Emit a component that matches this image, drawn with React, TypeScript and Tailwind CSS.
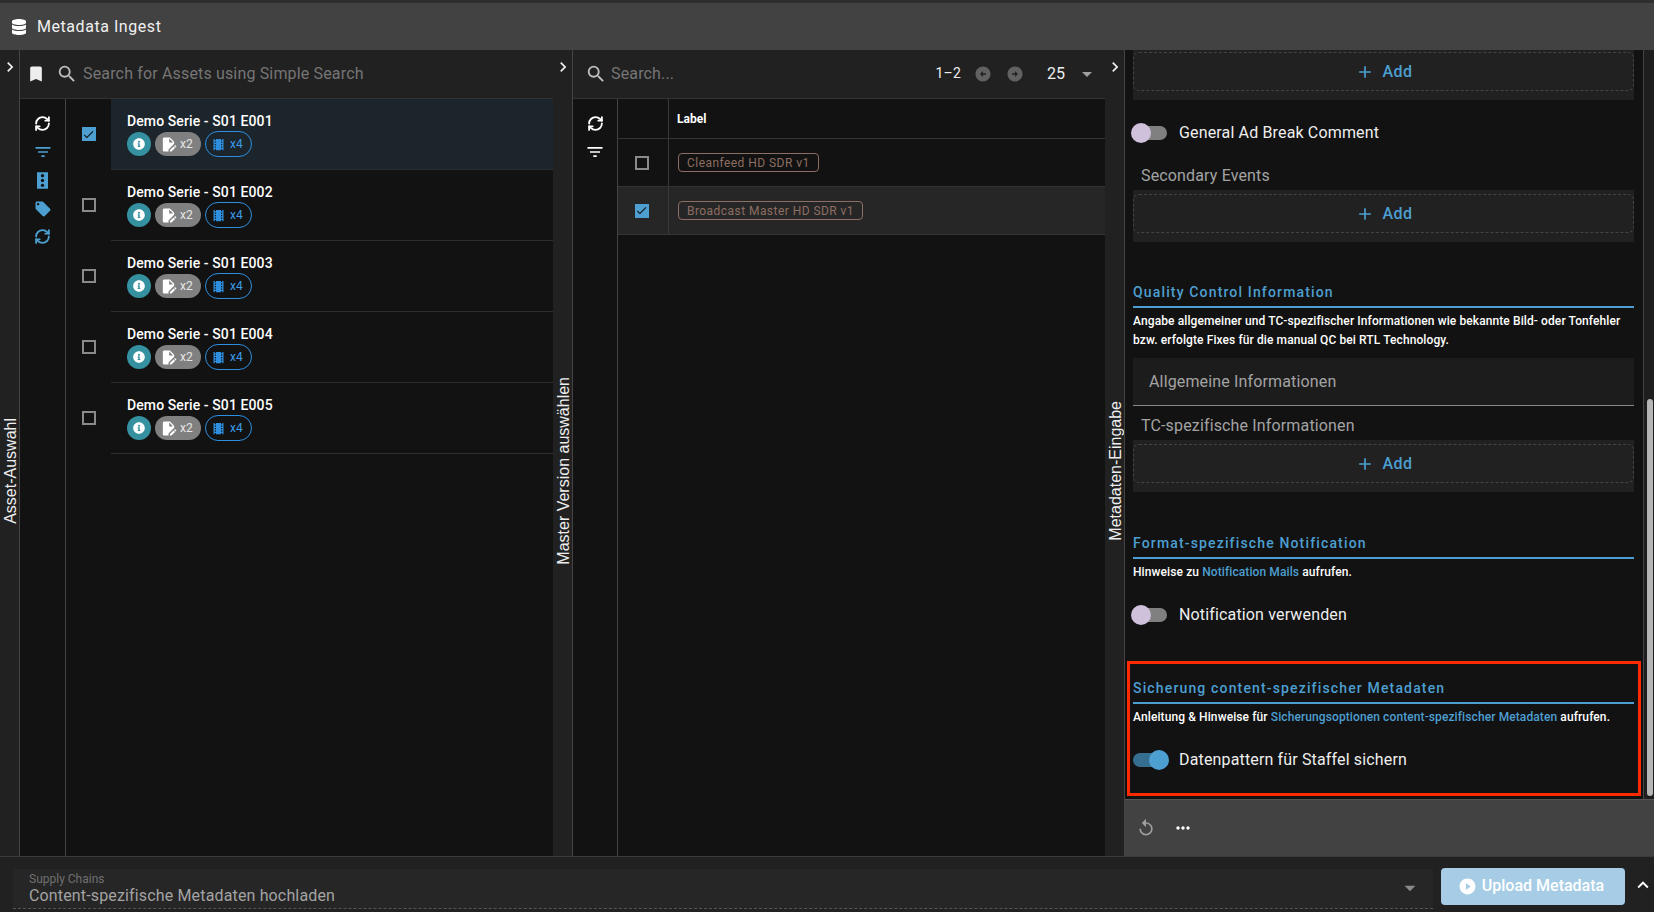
import type { ReactNode } from 'react'
import {
  MdAdd,
  MdArrowCircleLeft,
  MdArrowCircleRight,
  MdArrowDropDown,
  MdBookmark,
  MdCheck,
  MdChevronRight,
  MdEditDocument,
  MdFilterList,
  MdKeyboardArrowUp,
  MdLocalMovies,
  MdLocalOffer,
  MdMoreHoriz,
  MdPlayCircleFilled,
  MdReplay,
  MdSearch,
} from 'react-icons/md'
import { FaDatabase, FaInfoCircle } from 'react-icons/fa'
import { RefreshCw } from 'lucide-react'

const assets = ['E001', 'E002', 'E003', 'E004', 'E005']

function Rail({ label }: { label: string }) {
  return (
    <div className="flex h-full w-[20px] shrink-0 flex-col items-center border-r border-[#444] bg-[#212121] text-[#eee]">
      <MdChevronRight className="mt-[7px] size-[20px] shrink-0" />
      <div className="flex flex-1 items-center pl-[2px] pt-[8px]">
        <span className="rotate-180 whitespace-nowrap font-['Liberation_Sans',sans-serif] text-[16px] [writing-mode:vertical-rl]">
          {label}
        </span>
      </div>
    </div>
  )
}

function Checkbox({ checked }: { checked?: boolean }) {
  if (checked) {
    return (
      <span className="flex size-[14px] items-center justify-center bg-[#4d9fd1] text-[#111]">
        <MdCheck className="size-[13px]" />
      </span>
    )
  }
  return <span className="size-[14px] border-2 border-[#8a8a8a]" />
}

function StackIcon() {
  return (
    <svg viewBox="0 0 16 24" className="h-[17px] w-[11px]" fill="#4d9fd1">
      <path d="M0 0h16v24H0z" />
      <circle cx="8" cy="5" r="2.4" fill="#121212" />
      <circle cx="8" cy="12" r="2.4" fill="#121212" />
      <circle cx="8" cy="19" r="2.4" fill="#121212" />
    </svg>
  )
}

function AssetRow({ episode, selected }: { episode: string; selected: boolean }) {
  return (
    <div className="flex h-[71px]">
      <div className="flex w-[45px] items-center justify-center pb-[1px]">
        <Checkbox checked={selected} />
      </div>
      <div
        className={`flex-1 border-b border-[#2e2e2e] pl-[16px] pt-[12px] ${selected ? 'bg-[#1c252c]' : ''}`}
      >
        <p className="text-[14px] font-medium leading-[20px] tracking-[0.1px] text-white">
          Demo Serie - S01 {episode}
        </p>
        <div className="flex items-center">
          <span className="flex size-[24px] items-center justify-center rounded-full bg-[#35909f] text-white">
            <FaInfoCircle className="size-[12px]" />
          </span>
          <span className="ml-[4px] flex h-[24px] w-[46px] items-center rounded-full bg-[#808080] pl-[5px] text-[12px] text-[#e6e6e6]">
            <MdEditDocument className="size-[17px] text-white" />
            <span className="ml-[3px]">x2</span>
          </span>
          <span className="ml-[4px] flex h-[26px] w-[47px] items-center rounded-full border border-[#2e8fe0] pl-[5px] text-[12px] text-[#3b9be8]">
            <MdLocalMovies className="size-[15px] text-[#2e8fe0]" />
            <span className="mb-[1px] ml-[4px]">x4</span>
          </span>
        </div>
      </div>
    </div>
  )
}

function VersionRow({ label, selected }: { label: string; selected?: boolean }) {
  return (
    <div className={`flex h-[48px] border-b border-[#333] ${selected ? 'bg-[#262626]' : ''}`}>
      <div className="flex w-[51px] items-center justify-center border-r border-[#3a3a3a] pr-[3px]">
        <Checkbox checked={selected} />
      </div>
      <div className="flex items-center pl-[9px]">
        <span className="flex h-[19px] items-center rounded-[4px] border border-[#8d6e63] px-[8px] text-[12px] tracking-[0.45px] text-[#8d6e63]">
          {label}
        </span>
      </div>
    </div>
  )
}

function AddBox({ first }: { first?: boolean }) {
  return (
    <div className={`bg-[#212121] pb-[9px] ${first ? 'pt-[2px]' : 'pt-[4px]'}`}>
      <div className="flex h-[39px] items-center justify-center gap-[8px] rounded-[6px] border border-dashed border-[#444] text-[16px] font-medium tracking-[0.4px] text-[#4d9fd1]">
        <MdAdd className="size-[20px]" />
        Add
      </div>
    </div>
  )
}

function Toggle({ label, on, className }: { label: string; on?: boolean; className?: string }) {
  return (
    <div className={`flex h-[30px] items-center ${className ?? ''}`}>
      <div className="relative ml-[-2px] h-[20px] w-[38px] shrink-0">
        <span
          className={`absolute left-[2px] top-[3px] h-[14px] w-[34px] rounded-full ${on ? 'bg-[#366e91]' : 'bg-[#808080]'}`}
        />
        <span
          className={`absolute top-0 size-[20px] rounded-full ${on ? 'left-[18px] bg-[#4d9fd1]' : 'left-0 bg-[#cfc0dc]'}`}
        />
      </div>
      <span className="ml-[10px] text-[16px] tracking-[0.15px] text-[#eee]">{label}</span>
    </div>
  )
}

function Section({ title, children, className }: { title: string; children: ReactNode; className?: string }) {
  return (
    <div className={className}>
      <h3 className="h-[27px] border-b-2 border-[#4d9fd1] pt-[1px] text-[14px] font-medium leading-[20px] tracking-[1.15px] text-[#4d9fd1]">
        {title}
      </h3>
      <p className="mt-[4px] text-[12px] font-medium leading-[19px] tracking-[0.1px] text-white">{children}</p>
    </div>
  )
}

function Link({ children }: { children: ReactNode }) {
  return <span className="text-[#4d9fd1]">{children}</span>
}

function FieldLabel({ children, className }: { children: ReactNode; className?: string }) {
  return <p className={`h-[24px] text-[16px] leading-[24px] tracking-[0.15px] text-[#a3a3a3] ${className ?? ''}`}>{children}</p>
}

export default function App() {
  return (
    <div className="flex h-[912px] w-[1654px] flex-col overflow-hidden bg-[#121212] font-['Roboto',sans-serif]">
      <div className="h-[3px] shrink-0 bg-[#2e2e2e]" />
      <header className="flex h-[47px] shrink-0 items-center bg-[#424242] pl-[11px] text-white">
        <FaDatabase className="size-[16px]" />
        <span className="ml-[10px] text-[16px] tracking-[0.55px] text-[#f0f0f0]">Metadata Ingest</span>
      </header>

      <main className="flex h-[806px] shrink-0">
        {/* Asset-Auswahl */}
        <Rail label="Asset-Auswahl" />
        <section className="flex w-[533px] shrink-0 flex-col">
          <div className="flex h-[49px] shrink-0 items-center border-b border-[#333] bg-[#212121] pb-[1px] pl-[6px] text-[#eee]">
            <MdBookmark className="size-[20px]" />
            <MdSearch className="ml-[10px] size-[22px] text-[#bdbdbd]" />
            <span className="ml-[5px] text-[16px] tracking-[0.16px] text-[#757575]">
              Search for Assets using Simple Search
            </span>
          </div>
          <div className="flex flex-1">
            <div className="flex w-[46px] shrink-0 flex-col items-center gap-[10px] border-r border-[#444] pt-[16px]">
              <RefreshCw className="size-[17px] text-white" strokeWidth={2.6} />
              <MdFilterList className="size-[20px] text-[#4d9fd1]" />
              <StackIcon />
              <MdLocalOffer className="ml-[1px] mt-[1px] size-[18px] text-[#4d9fd1]" />
              <RefreshCw className="size-[17px] text-[#4d9fd1]" strokeWidth={2.6} />
            </div>
            <div className="flex-1">
              {assets.map((episode, i) => (
                <AssetRow key={episode} episode={episode} selected={i === 0} />
              ))}
            </div>
          </div>
        </section>

        {/* Master Version */}
        <Rail label="Master Version auswählen" />
        <section className="flex w-[532px] shrink-0 flex-col">
          <div className="flex h-[49px] shrink-0 items-center border-b border-[#333] bg-[#212121] pb-[1px] pl-[12px] text-[#eee]">
            <MdSearch className="size-[22px] text-[#bdbdbd]" />
            <span className="ml-[4px] text-[16px] tracking-[0.15px] text-[#757575]">Search...</span>
            <span className="ml-auto text-[14px] tracking-[0.2px]">1–2</span>
            <MdArrowCircleLeft className="ml-[13px] size-[18px] text-[#616161]" />
            <MdArrowCircleRight className="ml-[14px] size-[18px] text-[#616161]" />
            <span className="ml-[23px] text-[16px]">25</span>
            <MdArrowDropDown className="ml-[10px] mr-[6px] size-[24px] text-[#a0a0a0]" />
          </div>
          <div className="flex flex-1">
            <div className="flex w-[45px] shrink-0 flex-col items-center gap-[10px] border-r border-[#444] pt-[16px] text-white">
              <RefreshCw className="size-[17px]" strokeWidth={2.6} />
              <MdFilterList className="size-[20px]" />
            </div>
            <div className="flex-1">
              <div className="flex h-[40px] border-b border-[#333]">
                <div className="w-[51px] border-r border-[#3a3a3a]" />
                <span className="flex items-center pl-[8px] text-[12px] font-bold text-white">Label</span>
              </div>
              <VersionRow label="Cleanfeed HD SDR v1" />
              <VersionRow label="Broadcast Master HD SDR v1" selected />
            </div>
          </div>
        </section>

        {/* Metadaten-Eingabe */}
        <Rail label="Metadaten-Eingabe" />
        <section className="flex flex-1 flex-col">
          <div className="flex h-[749px] shrink-0">
            <div className="relative flex w-[518px] shrink-0 flex-col overflow-hidden pl-[8px] pr-[9px]">
              <AddBox first />
              <Toggle label="General Ad Break Comment" className="mt-[18px]" />
              <FieldLabel className="mt-[16px] pl-[8px]">Secondary Events</FieldLabel>
              <div className="mt-[2px]">
                <AddBox />
              </div>
              <Section title="Quality Control Information" className="mt-[39px]">
                Angabe allgemeiner und TC-spezifischer Informationen wie bekannte Bild- oder Tonfehler
                <br />
                bzw. erfolgte Fixes für die manual QC bei RTL Technology.
              </Section>
              <div className="mt-[8px] flex h-[48px] items-center border-b border-[#888] bg-[#1c1c1c] pl-[16px]">
                <FieldLabel>Allgemeine Informationen</FieldLabel>
              </div>
              <FieldLabel className="mt-[8px] pl-[8px]">TC-spezifische Informationen</FieldLabel>
              <div className="mt-[2px]">
                <AddBox />
              </div>
              <Section title="Format-spezifische Notification" className="mt-[40px]">
                Hinweise zu <Link>Notification Mails</Link> aufrufen.
              </Section>
              <Toggle label="Notification verwenden" className="mt-[18px]" />
              <Section title="Sicherung content-spezifischer Metadaten" className="mt-[47px]">
                Anleitung &amp; Hinweise für <Link>Sicherungsoptionen content-spezifischer Metadaten</Link> aufrufen.
              </Section>
              <Toggle label="Datenpattern für Staffel sichern" on className="mt-[18px]" />
              <div className="absolute left-[2px] top-[611px] h-[135px] w-[514px] border-[3px] border-[#fb2a00]" />
            </div>
            <div className="relative flex-1 border-l border-[#444] bg-[#1e1e1e]">
              <div className="absolute left-[3px] top-[349px] h-[397px] w-[6px] rounded-full bg-[#b5b5b5]" />
            </div>
          </div>
          <div className="flex flex-1 items-center gap-[17px] border-t border-[#555] bg-[#424242] pl-[11px] text-[#9e9e9e]">
            <MdReplay className="size-[20px]" />
            <MdMoreHoriz className="size-[20px] text-white" />
          </div>
        </section>
      </main>

      <footer className="flex flex-1 items-center border-t border-[#3a3a3a] bg-[#212121] pl-[13px]">
        <div className="mt-[8px] flex h-[40px] w-[1420px] items-center justify-between border-b border-dashed border-[#555] bg-[#262626] pl-[16px] pr-[10px]">
          <div>
            <p className="text-[12px] leading-[14px] text-[#6f6f6f]">Supply Chains</p>
            <p className="text-[16px] leading-[19px] tracking-[0.15px] text-[#a3a3a3]">
              Content-spezifische Metadaten hochladen
            </p>
          </div>
          <MdArrowDropDown className="size-[26px] text-[#8a8a8a]" />
        </div>
        <button className="ml-[8px] mt-[3px] flex h-[37px] w-[184px] items-center justify-center gap-[5px] rounded-[4px] bg-[#a6cde5] pr-[4px] text-[16px] font-medium text-white">
          <MdPlayCircleFilled className="size-[19px]" />
          Upload Metadata
        </button>
        <MdKeyboardArrowUp className="ml-[7px] size-[22px] text-white" />
      </footer>
    </div>
  )
}
